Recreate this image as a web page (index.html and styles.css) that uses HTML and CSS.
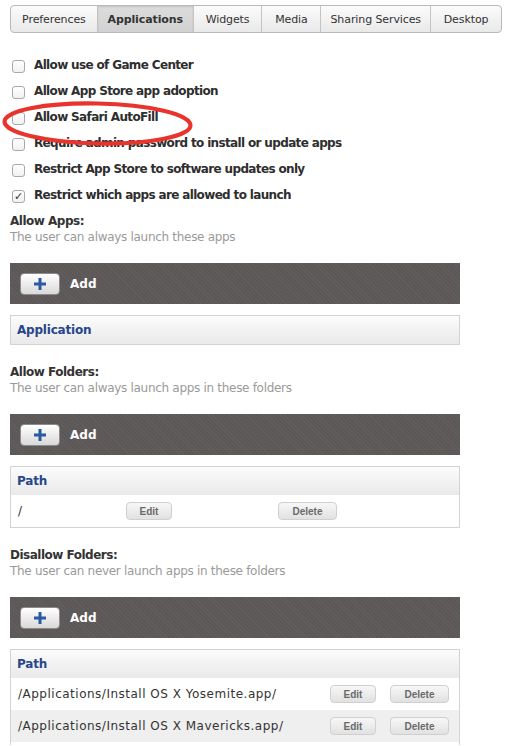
FILE: index.html
```html
<!DOCTYPE html>
<html>
<head>
<meta charset="utf-8">
<link rel="stylesheet" href="styles.css">
</head>
<body>
<div class="page">
  <div class="tabs">
    <div class="tab t1">Preferences</div>
    <div class="tab t2 active">Applications</div>
    <div class="tab t3">Widgets</div>
    <div class="tab t4">Media</div>
    <div class="tab t5">Sharing Services</div>
    <div class="tab t6">Desktop</div>
  </div>

  <div class="checks">
    <div class="check"><span class="box"></span><span class="label">Allow use of Game Center</span></div>
    <div class="check"><span class="box"></span><span class="label">Allow App Store app adoption</span></div>
    <div class="check"><span class="box"></span><span class="label">Allow Safari AutoFill</span></div>
    <div class="check"><span class="box"></span><span class="label">Require admin password to install or update apps</span></div>
    <div class="check"><span class="box"></span><span class="label">Restrict App Store to software updates only</span></div>
    <div class="check"><span class="box checked">&#10003;</span><span class="label">Restrict which apps are allowed to launch</span></div>
  </div>

  <div class="section s1">
    <div class="heading">Allow Apps:</div>
    <div class="sub">The user can always launch these apps</div>
    <div class="bar"><span class="addbtn"><svg width="14" height="14" viewBox="0 0 14 14"><path d="M7 1V13M1 7H13" stroke="#2b5aa0" stroke-width="3"/></svg></span><span class="addtxt">Add</span></div>
    <div class="table">
      <div class="thead">Application</div>
    </div>
  </div>

  <div class="section s2">
    <div class="heading">Allow Folders:</div>
    <div class="sub">The user can always launch apps in these folders</div>
    <div class="bar"><span class="addbtn"><svg width="14" height="14" viewBox="0 0 14 14"><path d="M7 1V13M1 7H13" stroke="#2b5aa0" stroke-width="3"/></svg></span><span class="addtxt">Add</span></div>
    <div class="table">
      <div class="thead">Path</div>
      <div class="row r-a"><span class="path">/</span><span class="btn edit">Edit</span><span class="btn del">Delete</span></div>
    </div>
  </div>

  <div class="section s3">
    <div class="heading">Disallow Folders:</div>
    <div class="sub">The user can never launch apps in these folders</div>
    <div class="bar"><span class="addbtn"><svg width="14" height="14" viewBox="0 0 14 14"><path d="M7 1V13M1 7H13" stroke="#2b5aa0" stroke-width="3"/></svg></span><span class="addtxt">Add</span></div>
    <div class="table open">
      <div class="thead">Path</div>
      <div class="row r-b"><span class="path">/Applications/Install OS X Yosemite.app/</span><span class="btn edit">Edit</span><span class="btn del">Delete</span></div>
      <div class="row r-b alt"><span class="path">/Applications/Install OS X Mavericks.app/</span><span class="btn edit">Edit</span><span class="btn del">Delete</span></div>
      <div class="tail"></div>
    </div>
  </div>
  <div class="frame-line"></div>

  <svg class="ring" width="200" height="54" viewBox="0 0 200 54"><ellipse cx="97.5" cy="25.5" rx="93" ry="20" fill="none" stroke="#e8342c" stroke-width="4.2" transform="rotate(1.2 97.5 25.5)"/></svg>
</div>
</body>
</html>
```

FILE: styles.css
```css
html, body {
  margin: 0;
  padding: 0;
  background: #ffffff;
}
body {
  font-family: "DejaVu Sans", "Liberation Sans", sans-serif;
  color: #333;
  width: 514px;
  height: 746px;
  overflow: hidden;
}
.page {
  position: relative;
  width: 514px;
  height: 746px;
}
.tabs {
  display: flex;
  margin: 5px 0 0 10px;
  width: 492px;
  height: 28px;
  box-sizing: border-box;
  border: 1px solid #b9b9b9;
  border-radius: 4px;
  overflow: hidden;
  background: linear-gradient(#fbfbfb, #e9e9e9);
}
.tab {
  display: flex;
  align-items: center;
  justify-content: center;
  font-size: 11px;
  color: #333;
  border-right: 1px solid #c4c4c4;
  box-sizing: border-box;
  letter-spacing: -0.1px;
}
.tab:last-child { border-right: none; }
.t1 { width: 87px; }
.t2 { width: 96px; }
.t3 { width: 69px; }
.t4 { width: 59px; }
.t5 { width: 110px; }
.t6 { width: 70px; }
.tab.active {
  background: linear-gradient(#dcdcdc, #d2d2d2);
  font-weight: bold;
  box-shadow: inset 0 1px 2px rgba(0,0,0,0.12);
}

.checks {
  margin-top: 19px;
  display: flex;
  flex-direction: column;
}
.check {
  display: flex;
  align-items: center;
  height: 26px;
  padding-left: 12px;
}
.box {
  width: 13px;
  height: 13px;
  box-sizing: border-box;
  border: 1px solid #a9a9a9;
  border-radius: 3px;
  background: linear-gradient(#ffffff, #f1f1f1);
  margin-right: 9px;
  margin-top: 3px;
  font-size: 11px;
  line-height: 11px;
  color: #333;
  text-align: center;
  font-weight: bold;
}
.label {
  font-size: 12px;
  font-weight: bold;
  color: #2e2e2e;
  letter-spacing: -0.65px;
  white-space: nowrap;
}

.section {
  padding: 0 54px 0 10px;
}
.s1 { margin-top: 5px; }
.s2 { margin-top: 19px; }
.s3 { margin-top: 19px; }
.heading {
  font-size: 12px;
  font-weight: bold;
  color: #333;
  height: 16px;
  line-height: 16px;
  letter-spacing: -0.5px;
}
.sub {
  font-size: 12px;
  color: #9a9a9a;
  height: 16px;
  line-height: 16px;
  letter-spacing: -0.3px;
}
.bar {
  margin-top: 18px;
  height: 41px;
  display: flex;
  align-items: center;
  padding-left: 10px;
  background-color: #5c5857;
  background-image: repeating-linear-gradient(45deg, rgba(255,255,255,0.035) 0 1px, rgba(0,0,0,0) 1px 3px);
}
.addbtn {
  width: 40px;
  height: 22px;
  box-sizing: border-box;
  border: 1px solid #8c8c8c;
  border-radius: 4px;
  background: linear-gradient(#ffffff, #d9d9d9);
  display: flex;
  align-items: center;
  justify-content: center;
}
.addtxt {
  margin-left: 10px;
  color: #fff;
  font-weight: bold;
  font-size: 12px;
}
.table {
  margin-top: 11px;
  border: 1px solid #d3d3d3;
}
.table.open { border-bottom: none; }
.thead {
  height: 28px;
  line-height: 28px;
  padding-left: 6px;
  font-size: 12px;
  font-weight: bold;
  color: #27468c;
  background: linear-gradient(#fcfcfc, #e9e9e9);
  letter-spacing: -0.2px;
}
.row {
  display: flex;
  align-items: center;
  height: 32px;
  background: #ffffff;
  font-size: 12px;
  color: #333;
}
.row.alt { background: #efefef; }
.path {
  padding-left: 7px;
  letter-spacing: 0.5px;
}
.btn {
  height: 18px;
  box-sizing: border-box;
  border: 1px solid #d0d0d0;
  border-radius: 4px;
  background: linear-gradient(#f7f7f7, #e1e1e1);
  color: #6a6a6a;
  font-family: "Liberation Sans", sans-serif;
  font-weight: bold;
  font-size: 10px;
  display: flex;
  align-items: center;
  justify-content: center;
}
.edit { width: 46px; }
.del { width: 59px; }
.r-a .path { width: 108px; }
.r-a .del { margin-left: 106px; }
.r-b .path { flex: 1; }
.r-b .del { margin-left: 14px; margin-right: 10px; }
.tail { height: 3px; background: #fff; }
.frame-line {
  position: absolute;
  left: 0;
  top: 744px;
  width: 514px;
  height: 1px;
  background: #c9c9c9;
}
.ring {
  position: absolute;
  left: 0;
  top: 93px;
}
```
